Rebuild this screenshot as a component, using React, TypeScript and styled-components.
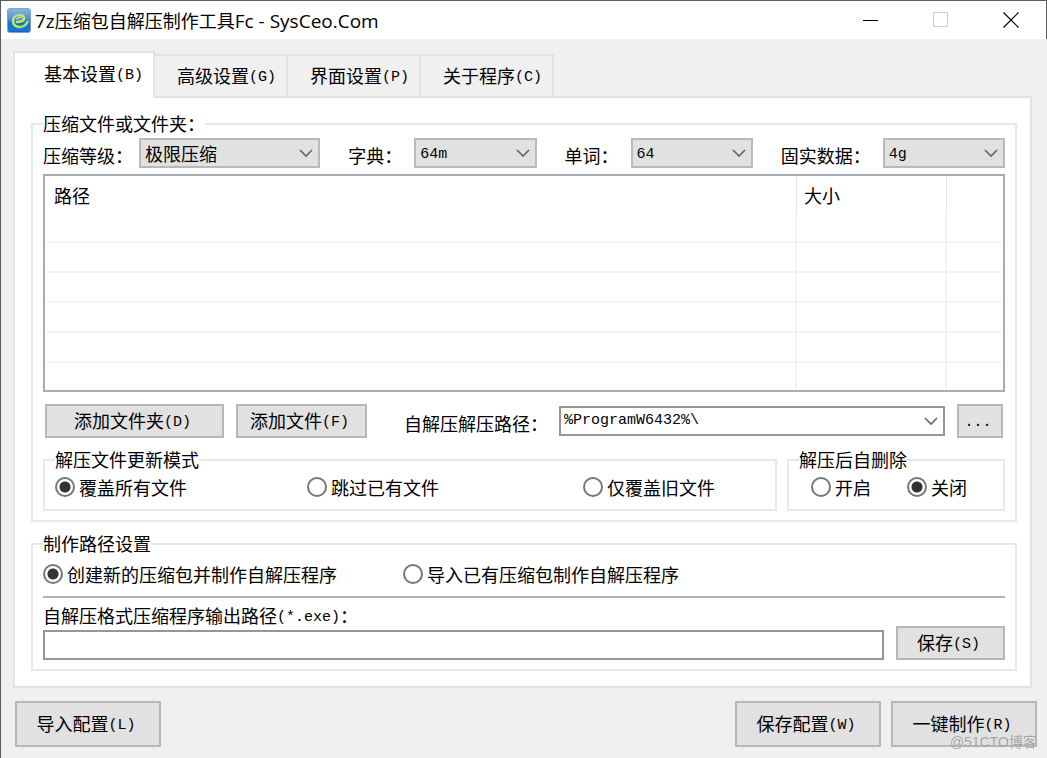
import React, { useState } from "react";
import styled, { createGlobalStyle } from "styled-components";

const cjk = `"Noto Sans CJK SC", sans-serif`;
const mono = `"Liberation Mono", "Noto Sans CJK SC", monospace`;

const GlobalStyle = createGlobalStyle`
  * { box-sizing: border-box; }
  body { margin: 0; background: #f0f0f0; color: #000; font: 18px/24px ${cjk}; }
  button, input, select { font: inherit; color: inherit; margin: 0; border-radius: 0; }
`;

const Window = styled.div`
  min-height: 100vh;
  border-left: 1px solid #5c5c5c;
  background: #f0f0f0;
`;

const TitleBar = styled.header`
  display: flex;
  align-items: center;
  height: 39px;
  padding-left: 6px;
  border: solid #5c5c5c;
  border-width: 1px 1px 0 0;
  background: #fff;
`;

const Title = styled.h1`
  flex: 1;
  margin: 0 0 0 4px;
  font: 400 18px/24px ${cjk};
`;

const TitleLatin = styled.span`
  font-family: "Open Sans", sans-serif;
  font-size: 19px;
  line-height: 1;
`;

const WindowButton = styled.button`
  display: grid;
  place-items: center;
  width: 70px;
  height: 38px;
  padding: 0;
  border: 0;
  background: none;
`;

const Main = styled.main`
  padding: 12px 15px 10px 12px;
`;

const TabList = styled.div`
  display: flex;
  align-items: flex-end;
`;

const Tab = styled.button<{ $active: boolean }>`
  position: relative;
  width: ${(p) => (p.$active ? 142 : 133)}px;
  height: ${(p) => (p.$active ? 47 : 42)}px;
  margin-bottom: ${(p) => (p.$active ? -2 : 0)}px;
  padding: 0 10px ${(p) => (p.$active ? 6 : 2)}px 0;
  border: solid #e2e2e2;
  border-width: 2px 2px 0 ${(p) => (p.$active ? 2 : 0)}px;
  background: ${(p) => (p.$active ? "#fff" : "#f0f0f0")};
  text-align: right;
`;

const Pane = styled.section`
  padding: 14px 13px 15px 16px;
  border: 2px solid #e2e2e2;
  background: #fff;
`;

const Group = styled.fieldset<{ $spaced?: boolean }>`
  min-width: 0;
  margin: ${(p) => (p.$spaced ? 10 : 0)}px 0 0;
  padding: 0 10px 9px;
  border: 2px solid #e8e8e8;
`;

const ModeGroup = styled(Group)<{ $basis: number }>`
  flex: 1 1 ${(p) => p.$basis}px;
  padding-bottom: 7px;
`;

const Legend = styled.legend`
  padding: 0 0 2px;
  line-height: 22px;
`;

const Latin = styled.span`
  font-family: ${mono};
  font-size: 15px;
  line-height: 1;
  vertical-align: 2px;
`;

const CompressionRow = styled.div`
  display: flex;
  align-items: flex-end;
  gap: 28px;
  padding-top: 2px;
`;

const Field = styled.div<{ $basis: number; $gap: number }>`
  display: flex;
  flex: 1 1 ${(p) => p.$basis}px;
  align-items: flex-end;
  gap: ${(p) => p.$gap}px;
`;

const Label = styled.label`
  flex: none;
  line-height: 26px;
`;

const SelectBox = styled.div`
  display: grid;
  flex: 1;
  align-items: center;

  > * { grid-area: 1 / 1; }
  > svg { justify-self: end; margin-right: 6px; pointer-events: none; }
`;

const Select = styled.select<{ $latin?: boolean }>`
  width: 100%;
  min-width: 0;
  height: 30px;
  padding: ${(p) => (p.$latin ? 3 : 0)}px 4px 0;
  border: 2px solid #b9b9b9;
  background: #e1e1e1;
  appearance: none;
  font-family: ${(p) => (p.$latin ? mono : cjk)};
  font-size: ${(p) => (p.$latin ? 15 : 18)}px;
`;

const FileList = styled.div`
  height: 218px;
  margin-top: 6px;
  padding: 0 2px;
  overflow: hidden;
  border: 2px solid #a9acb2;
`;

const FileTable = styled.table`
  width: 100%;
  table-layout: fixed;
  border-collapse: separate;
  border-spacing: 0;
`;

const HeadCell = styled.th<{ $width?: number }>`
  width: ${(p) => (p.$width ? `${p.$width}px` : "auto")};
  height: 37px;
  padding: 0 7px;
  border-right: 1px solid #e5e5e5;
  font-weight: 400;
  text-align: left;

  &:last-child { border-right: 0; }
`;

const Cell = styled.td`
  height: 30px;
  padding: 0;
  border: solid #f3f3f3;
  border-width: 0 2px 2px 0;

  &:last-child { border-right: 0; }
`;

const Button = styled.button<{ $width: number; $tall?: boolean }>`
  flex: none;
  width: ${(p) => p.$width}px;
  height: ${(p) => (p.$tall ? 46 : 34)}px;
  padding: 0 4px 2px 0;
  border: 2px solid #b7b7b7;
  background: #e1e1e1;
  white-space: nowrap;
`;

const ActionRow = styled.div`
  display: flex;
  align-items: center;
  gap: 12px;
  margin: 12px 2px 10px;
`;

const PathField = styled.div`
  display: flex;
  flex: 1;
  align-items: center;
  gap: 11px;
  padding-left: 25px;

  > label { padding-top: 4px; }
`;

const TextBox = styled.input`
  display: block;
  width: 100%;
  min-width: 0;
  height: 30px;
  padding: 0 3px 2px;
  border: 2px solid #969696;
  background: #fff;
  font-family: ${mono};
  font-size: 15px;
`;

const ModeRow = styled.div`
  display: flex;
  gap: 10px;
`;

const RadioGrid = styled.div<{ $columns: string; $inset?: boolean; $tall?: boolean }>`
  display: grid;
  grid-template-columns: ${(p) => p.$columns};
  align-items: center;
  height: ${(p) => (p.$tall ? 36 : 30)}px;
  padding-left: ${(p) => (p.$inset ? 12 : 0)}px;
`;

const RadioLabel = styled.label`
  display: flex;
  align-items: center;
  gap: 4px;
  white-space: nowrap;
`;

const Radio = styled.input`
  flex: none;
  width: 20px;
  height: 20px;
  border: 2px solid #767676;
  border-radius: 50%;
  background: #fff;
  appearance: none;

  &:checked { background: radial-gradient(circle, #333 5px, #fff 6px); }
`;

const Divider = styled.hr`
  height: 2px;
  margin: 4px 0;
  border: 0;
  background: #b0b0b0;
`;

const OutputRow = styled.div`
  display: flex;
  align-items: flex-end;
  gap: 12px;
`;

const OutputField = styled.div`
  flex: 1;

  > label { display: block; padding-bottom: 2px; }
`;

const Footer = styled.footer`
  display: flex;
  gap: 10px;
  margin: 13px -5px 0 2px;
`;

const Spacer = styled.div`
  flex: 1;
`;

const Watermark = styled.span`
  position: fixed;
  right: 10px;
  bottom: 6px;
  color: #a6a6a6;
  font: 14px/20px "Liberation Sans", ${cjk};
  pointer-events: none;
`;

const Chevron = () => (
  <svg width="16" height="10" viewBox="0 0 16 10" fill="none" stroke="#666" strokeWidth="1.6" aria-hidden="true">
    <path d="M2 2l6 6 6-6" />
  </svg>
);

const AppIcon = () => (
  <svg width="24" height="25" viewBox="0 0 24 25" fill="none" aria-hidden="true">
    <defs>
      <linearGradient id="tile" x1="0" y1="0" x2="0" y2="1">
        <stop offset="0" stopColor="#8fb4e0" />
        <stop offset=".45" stopColor="#4a92cf" />
        <stop offset=".6" stopColor="#0f6fc9" />
        <stop offset=".9" stopColor="#1478d8" />
        <stop offset="1" stopColor="#1857a5" />
      </linearGradient>
      <linearGradient id="swirl" x1="0" y1="0" x2="1" y2="1">
        <stop offset="0" stopColor="#a7dca0" />
        <stop offset=".5" stopColor="#d3e650" />
        <stop offset="1" stopColor="#8fd870" />
      </linearGradient>
    </defs>
    <rect x=".5" y=".5" width="23" height="24" rx="2.5" fill="url(#tile)" stroke="#7ba3d4" />
    <path d="M10 14c5 0 7-1.500 7-4 0-2-2-3-4.500-3C8.500 7 6 9.500 6 13c0 4 3 6 6.500 6 4 0 6.500-2 8-5" stroke="url(#swirl)" strokeWidth="2.600" strokeLinecap="round" />
    <path d="M10 11c1-1.500 2.500-2 4-1.500" stroke="#c5e37a" strokeWidth="1.500" strokeLinecap="round" />
  </svg>
);

const tabs = [
  ["基本设置", "(B)"],
  ["高级设置", "(G)"],
  ["界面设置", "(P)"],
  ["关于程序", "(C)"],
];

const compression = [
  { id: "level", label: "压缩等级：", value: "极限压缩", basis: 277, gap: 6 },
  { id: "dict", label: "字典：", value: "64m", basis: 188, gap: 12 },
  { id: "word", label: "单词：", value: "64", basis: 188, gap: 12 },
  { id: "solid", label: "固实数据：", value: "4g", basis: 224, gap: 12 },
];

function RadioSet({ name, options, initial, ...layout }: {
  name: string;
  options: string[];
  initial: number;
  columns: string;
  inset?: boolean;
  tall?: boolean;
}) {
  const [picked, setPicked] = useState(initial);
  return (
    <RadioGrid $columns={layout.columns} $inset={layout.inset} $tall={layout.tall}>
      {options.map((text, i) => (
        <RadioLabel key={text}>
          <Radio type="radio" name={name} checked={picked === i} onChange={() => setPicked(i)} />
          {text}
        </RadioLabel>
      ))}
    </RadioGrid>
  );
}

export default function App() {
  const [active, setActive] = useState(0);
  return (
    <Window>
      <GlobalStyle />
      <TitleBar>
        <AppIcon />
        <Title>
          <TitleLatin>7z</TitleLatin>压缩包自解压制作工具<TitleLatin>Fc - SysCeo.Com</TitleLatin>
        </Title>
        <WindowButton aria-label="最小化">
          <svg width="16" height="16" stroke="#000"><path d="M0 8.5h15" /></svg>
        </WindowButton>
        <WindowButton aria-label="最大化" disabled>
          <svg width="16" height="16" fill="none" stroke="#ccc"><path d="M.5 .5h14v14H.5z" /></svg>
        </WindowButton>
        <WindowButton aria-label="关闭">
          <svg width="16" height="16" stroke="#000" strokeWidth="1.2"><path d="M.5 .5l15 15M15.5 .5l-15 15" /></svg>
        </WindowButton>
      </TitleBar>
      <Main>
        <TabList role="tablist">
          {tabs.map(([text, key], i) => (
            <Tab key={key} role="tab" aria-selected={i === active} $active={i === active} onClick={() => setActive(i)}>
              {text}<Latin>{key}</Latin>
            </Tab>
          ))}
        </TabList>
        <Pane>
          <Group>
            <Legend>压缩文件或文件夹：</Legend>
            <CompressionRow>
              {compression.map((f) => (
                <Field key={f.id} $basis={f.basis} $gap={f.gap}>
                  <Label htmlFor={f.id}>{f.label}</Label>
                  <SelectBox>
                    <Select id={f.id} $latin={f.id !== "level"}>
                      <option>{f.value}</option>
                    </Select>
                    <Chevron />
                  </SelectBox>
                </Field>
              ))}
            </CompressionRow>
            <FileList>
              <FileTable>
                <thead>
                  <tr>
                    <HeadCell>路径</HeadCell>
                    <HeadCell $width={150}>大小</HeadCell>
                    <HeadCell $width={54} />
                  </tr>
                </thead>
                <tbody>
                  {[1, 2, 3, 4, 5, 6].map((row) => (
                    <tr key={row}><Cell /><Cell /><Cell /></tr>
                  ))}
                </tbody>
              </FileTable>
            </FileList>
            <ActionRow>
              <Button $width={179}>添加文件夹<Latin>(D)</Latin></Button>
              <Button $width={131}>添加文件<Latin>(F)</Latin></Button>
              <PathField>
                <Label htmlFor="extract">自解压解压路径：</Label>
                <SelectBox>
                  <TextBox id="extract" defaultValue="%ProgramW6432%\" />
                  <Chevron />
                </SelectBox>
              </PathField>
              <Button $width={46}><Latin>...</Latin></Button>
            </ActionRow>
            <ModeRow>
              <ModeGroup $basis={734}>
                <Legend>解压文件更新模式</Legend>
                <RadioSet name="mode" options={["覆盖所有文件", "跳过已有文件", "仅覆盖旧文件"]} initial={0} columns="252fr 276fr 182fr" />
              </ModeGroup>
              <ModeGroup $basis={218}>
                <Legend>解压后自删除</Legend>
                <RadioSet name="remove" options={["开启", "关闭"]} initial={1} columns="96px 1fr" inset />
              </ModeGroup>
            </ModeRow>
          </Group>
          <Group $spaced>
            <Legend>制作路径设置</Legend>
            <RadioSet name="source" options={["创建新的压缩包并制作自解压程序", "导入已有压缩包制作自解压程序"]} initial={0} columns="360px 1fr" tall />
            <Divider />
            <OutputRow>
              <OutputField>
                <Label htmlFor="output">自解压格式压缩程序输出路径<Latin>(*.exe)</Latin>：</Label>
                <TextBox id="output" />
              </OutputField>
              <Button $width={109}>保存<Latin>(S)</Latin></Button>
            </OutputRow>
          </Group>
        </Pane>
        <Footer>
          <Button $width={146} $tall>导入配置<Latin>(L)</Latin></Button>
          <Spacer />
          <Button $width={146} $tall>保存配置<Latin>(W)</Latin></Button>
          <Button $width={146} $tall>一键制作<Latin>(R)</Latin></Button>
        </Footer>
      </Main>
      <Watermark>@51CTO博客</Watermark>
    </Window>
  );
}
